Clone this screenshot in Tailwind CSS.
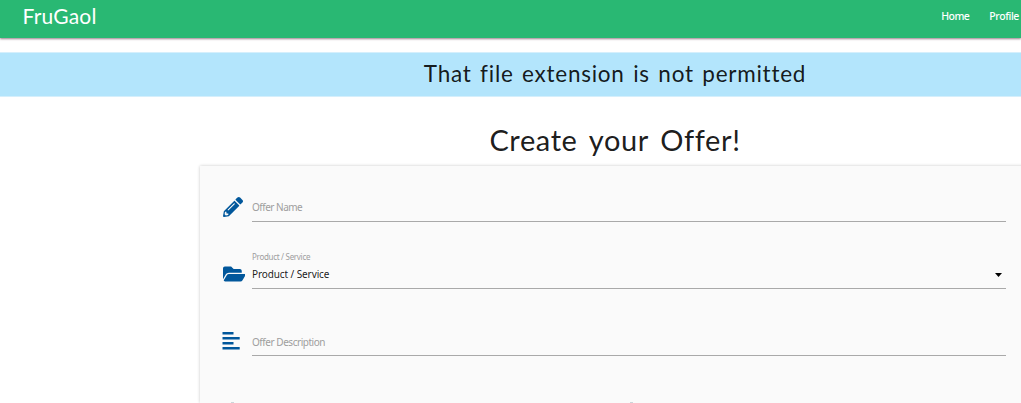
<!DOCTYPE html>
<html lang="en">
<head>
<meta charset="utf-8">
<title>FruGaol</title>
<script src="https://cdn.jsdelivr.net/npm/@tailwindcss/browser@4"></script>
</head>
<body class="h-[403px] overflow-hidden bg-white font-['Noto_Sans',sans-serif] text-black/90">
<div class="h-[403px] w-full overflow-hidden">
  <nav class="flex h-[38px] items-start justify-between bg-[#29b873] pl-[22.5px] pr-[2px] text-white shadow-[0_1px_2px_rgba(70,20,40,0.55)]">
    <a class="whitespace-nowrap font-[Lato,sans-serif] text-[21px] leading-[31px] tracking-[0.2px]">FruGaol</a>
    <div class="flex gap-[20px] pt-[6px] font-['Noto_Sans',sans-serif] text-[10.5px] font-medium leading-5 tracking-[-0.55px] whitespace-nowrap">
      <a>Home</a><a class="tracking-[-0.4px]">Profile</a>
    </div>
  </nav>
  <div class="mt-[14px] h-[45px] w-[1230px] border-y border-[#d5effc] bg-[#b3e5fc] text-center font-[Lato,sans-serif] text-[22.5px] leading-[42px] tracking-[0.75px] [word-spacing:2px]">That file extension is not permitted</div>
  <h1 class="mt-[23px] h-[46px] w-[1230px] text-center font-[Lato,sans-serif] text-[29px] leading-[39px] tracking-[0.6px] [word-spacing:4px]">Create your Offer!</h1>
  <main class="ml-[200px] h-[237px] w-[830px] bg-[#fafafa] pl-[22px] pt-[28px] text-[10px] shadow-[0_0_3px_rgba(0,0,0,0.22)]">
    <div class="flex h-[67px] items-start">
      <svg class="ml-[0.5px] mt-[2.5px] h-5 w-5 shrink-0 fill-[#01579b]" viewBox="0 0 512 512"><path d="M497.9 142.1l-46.1 46.1c-4.7 4.7-12.3 4.7-17 0l-111-111c-4.7-4.7-4.7-12.3 0-17l46.1-46.1c18.7-18.7 49.1-18.7 67.9 0l60.1 60.1c18.8 18.7 18.8 49.1 0 67.9zM284.2 99.8L21.6 362.4.4 483.9c-2.9 16.4 11.4 30.6 27.8 27.8l121.5-21.3 262.6-262.6c4.7-4.7 4.7-12.3 0-17l-111-111c-4.8-4.7-12.4-4.7-17.1 0zM124.1 339.9c-5.5-5.5-5.5-14.3 0-19.8l154-154c5.5-5.5 14.3-5.5 19.8 0s5.5 14.3 0 19.8l-154 154c-5.5 5.5-14.3 5.5-19.8 0zM88 424h48v36.3l-64.5 11.3-31.1-31.1L51.7 376H88v48z"/></svg>
      <div class="ml-[9.5px] h-[28px] w-[754px] border-b border-[#a9a9a9] leading-[26px] tracking-[-0.5px] text-[#9e9e9e]">Offer Name</div>
    </div>
    <div class="flex h-[67px] items-start">
      <svg class="ml-[0.5px] mt-[3px] h-5 w-[22.5px] shrink-0 fill-[#01579b]" viewBox="0 0 576 512"><path d="M572.694 292.093L500.27 416.248A63.997 63.997 0 0 1 444.989 448H45.025c-18.523 0-30.064-20.093-20.731-36.093l72.424-124.155A64 64 0 0 1 152 256h399.964c18.523 0 30.064 20.093 20.73 36.093zM152 224h328v-48c0-26.51-21.49-48-48-48H272l-64-64H48C21.49 64 0 85.49 0 112v278.046l69.077-118.418C86.214 242.25 117.989 224 152 224z"/></svg>
      <div class="-mt-[12px] ml-[7px] w-[754px]">
        <div class="h-[12px] text-[8px] leading-[15px] tracking-[-0.3px] text-[#9e9e9e]">Product / Service</div>
        <div class="flex h-[28px] items-center justify-between border-b border-[#a9a9a9] pr-[4px] leading-[26px] tracking-[-0.1px]"><span class="-mt-px">Product / Service</span><svg class="h-[4px] w-[7px]" viewBox="0 0 7 4"><path d="M0 0h7L3.5 4z"/></svg></div>
      </div>
    </div>
    <div class="flex h-[67px] items-start">
      <svg class="mt-[4px] h-[18px] w-[18px] shrink-0 fill-[#01579b]" viewBox="0 0 18 18"><path d="M.5 0h11v2.6H.5zM.5 5h17.2v2.6H.5zM.5 10h11v2.5H.5zM.5 15h17.2v2.5H.5z"/></svg>
      <div class="ml-[12px] h-[28px] w-[754px] border-b border-[#a9a9a9] leading-[28px] tracking-[-0.46px] text-[#9e9e9e]">Offer Description</div>
    </div>
    <div class="flex gap-[396px] pl-[9px] pt-[7px]">
      <span class="h-px w-[3px] bg-[#cbd5da]"></span><span class="h-px w-[3px] bg-[#cbd5da]"></span>
    </div>
  </main>
</div>
</body>
</html>
